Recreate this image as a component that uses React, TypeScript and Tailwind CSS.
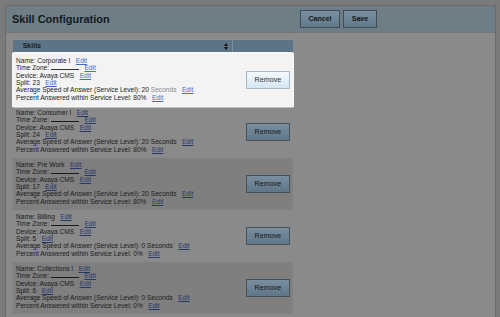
import React from "react";

interface Skill {
  name: string;
  split: string;
  asa: string;
  pct: string;
}

const skills: Skill[] = [
  { name: "Corporate I", split: "23", asa: "20", pct: "80%" },
  { name: "Consumer I", split: "24", asa: "20", pct: "80%" },
  { name: "Pre Work", split: "17", asa: "20", pct: "80%" },
  { name: "Billing", split: "5", asa: "0", pct: "0%" },
  { name: "Collections I", split: "6", asa: "0", pct: "0%" },
];

const EditLink = ({ active }: { active: boolean }) => (
  <a
    className={
      active
        ? "ml-[5.5px] text-[#3d6fc3] underline"
        : "ml-[5.5px] text-[#26376a] underline"
    }
  >
    Edit
  </a>
);

const SortIcon = () => (
  <svg width="4" height="7" viewBox="0 0 4 7" className="block">
    <path d="M2 0 L4 3 L0 3 Z" fill="#111" />
    <path d="M2 7 L4 4 L0 4 Z" fill="#111" />
  </svg>
);

const SkillRow = ({ skill, index }: { skill: Skill; index: number }) => {
  const active = index === 0;
  let rowClass = "flex h-[52px] w-[280px]";
  if (active) {
    rowClass +=
      " relative z-10 bg-[#f3f3f3] text-[#222] shadow-[0_0_0_1px_#f7f7f7,0_-2px_0_0_#f7f7f7,0_1.5px_0_0_#f7f7f7]";
  } else if (index % 2 === 0) {
    rowClass += " bg-[#7f7f7f] text-[#1b1b1b]";
  } else {
    rowClass += " text-[#1b1b1b]";
  }

  return (
    <div className={rowClass}>
      <div className="w-[220px] pl-[3.3px] pt-[3px] text-[6.6px] leading-[7.33px] whitespace-nowrap">
        <div>
          Name: {skill.name}
          <EditLink active={active} />
        </div>
        <div>
          Time Zone:{" "}
          <span
            className={
              active
                ? "inline-block h-[5px] w-[28px] border-b border-[#333]"
                : "inline-block h-[5px] w-[28px] border-b border-[#1b1b1b]"
            }
          />
          <EditLink active={active} />
        </div>
        <div>
          Device: Avaya CMS
          <EditLink active={active} />
        </div>
        <div>
          Split: {skill.split}
          <EditLink active={active} />
        </div>
        <div>
          Average Speed of Answer (Service Level): {skill.asa}{" "}
          <span className={active ? "text-[#8a8a8a]" : ""}>Seconds</span>
          <EditLink active={active} />
        </div>
        <div>
          Percent Answered within Service Level: {skill.pct}
          <EditLink active={active} />
        </div>
      </div>
      <div className="flex w-[60px] items-center pl-[13.5px]">
        <button
          className={
            active
              ? "h-[17.5px] w-[43.5px] border border-[#a9b5bf] bg-linear-to-b from-[#f4f9fd] to-[#d3e5f4] text-[7.2px] text-[#333]"
              : "h-[17.5px] w-[43.5px] border border-[#45525c] bg-linear-to-b from-[#7a8fa0] to-[#5f7689] text-[7.2px] text-[#151515]"
          }
        >
          Remove
        </button>
      </div>
    </div>
  );
};

const App = () => {
  return (
    <div className="h-[317px] w-[500px] overflow-hidden bg-[#7b7b7b] pt-[5px] pl-[5px] pr-[4px] font-['Liberation_Sans',Arial,sans-serif]">
      <div className="h-[320px] border border-[#6a6a6a] bg-[#8a8a8a]">
        <div className="flex h-[27px] items-center border-b border-[#767676] bg-[#6e7e87] pl-[6px]">
          <h1 className="w-[288px] text-[11px] font-bold text-[#151a1d]">
            Skill Configuration
          </h1>
          <div className="flex gap-[3px]">
            <button className="h-[17.5px] w-[40px] border border-[#3f4c55] bg-linear-to-b from-[#7a91a3] to-[#62798b] text-[7px] font-bold text-[#151515]">
              Cancel
            </button>
            <button className="h-[17.5px] w-[34px] border border-[#3f4c55] bg-linear-to-b from-[#7a91a3] to-[#62798b] text-[7px] font-bold text-[#151515]">
              Save
            </button>
          </div>
        </div>

        <div className="pl-[6.7px] pt-[6px]">
          <div className="flex h-[13px] w-[280px] border-t border-[#8f8f8f]">
            <div className="flex w-[219.5px] items-center justify-between bg-[#5c7486] pl-[10px] pr-[4px]">
              <span className="text-[7px] font-bold text-[#17202a]">Skills</span>
              <SortIcon />
            </div>
            <div className="w-px bg-[#7d8e9a]" />
            <div className="flex-1 bg-[#5c7486]" />
          </div>
          <div className="h-[2px]" />
          {skills.map((skill, i) => (
            <SkillRow key={skill.name} skill={skill} index={i} />
          ))}
        </div>
      </div>
    </div>
  );
};

export default App;
